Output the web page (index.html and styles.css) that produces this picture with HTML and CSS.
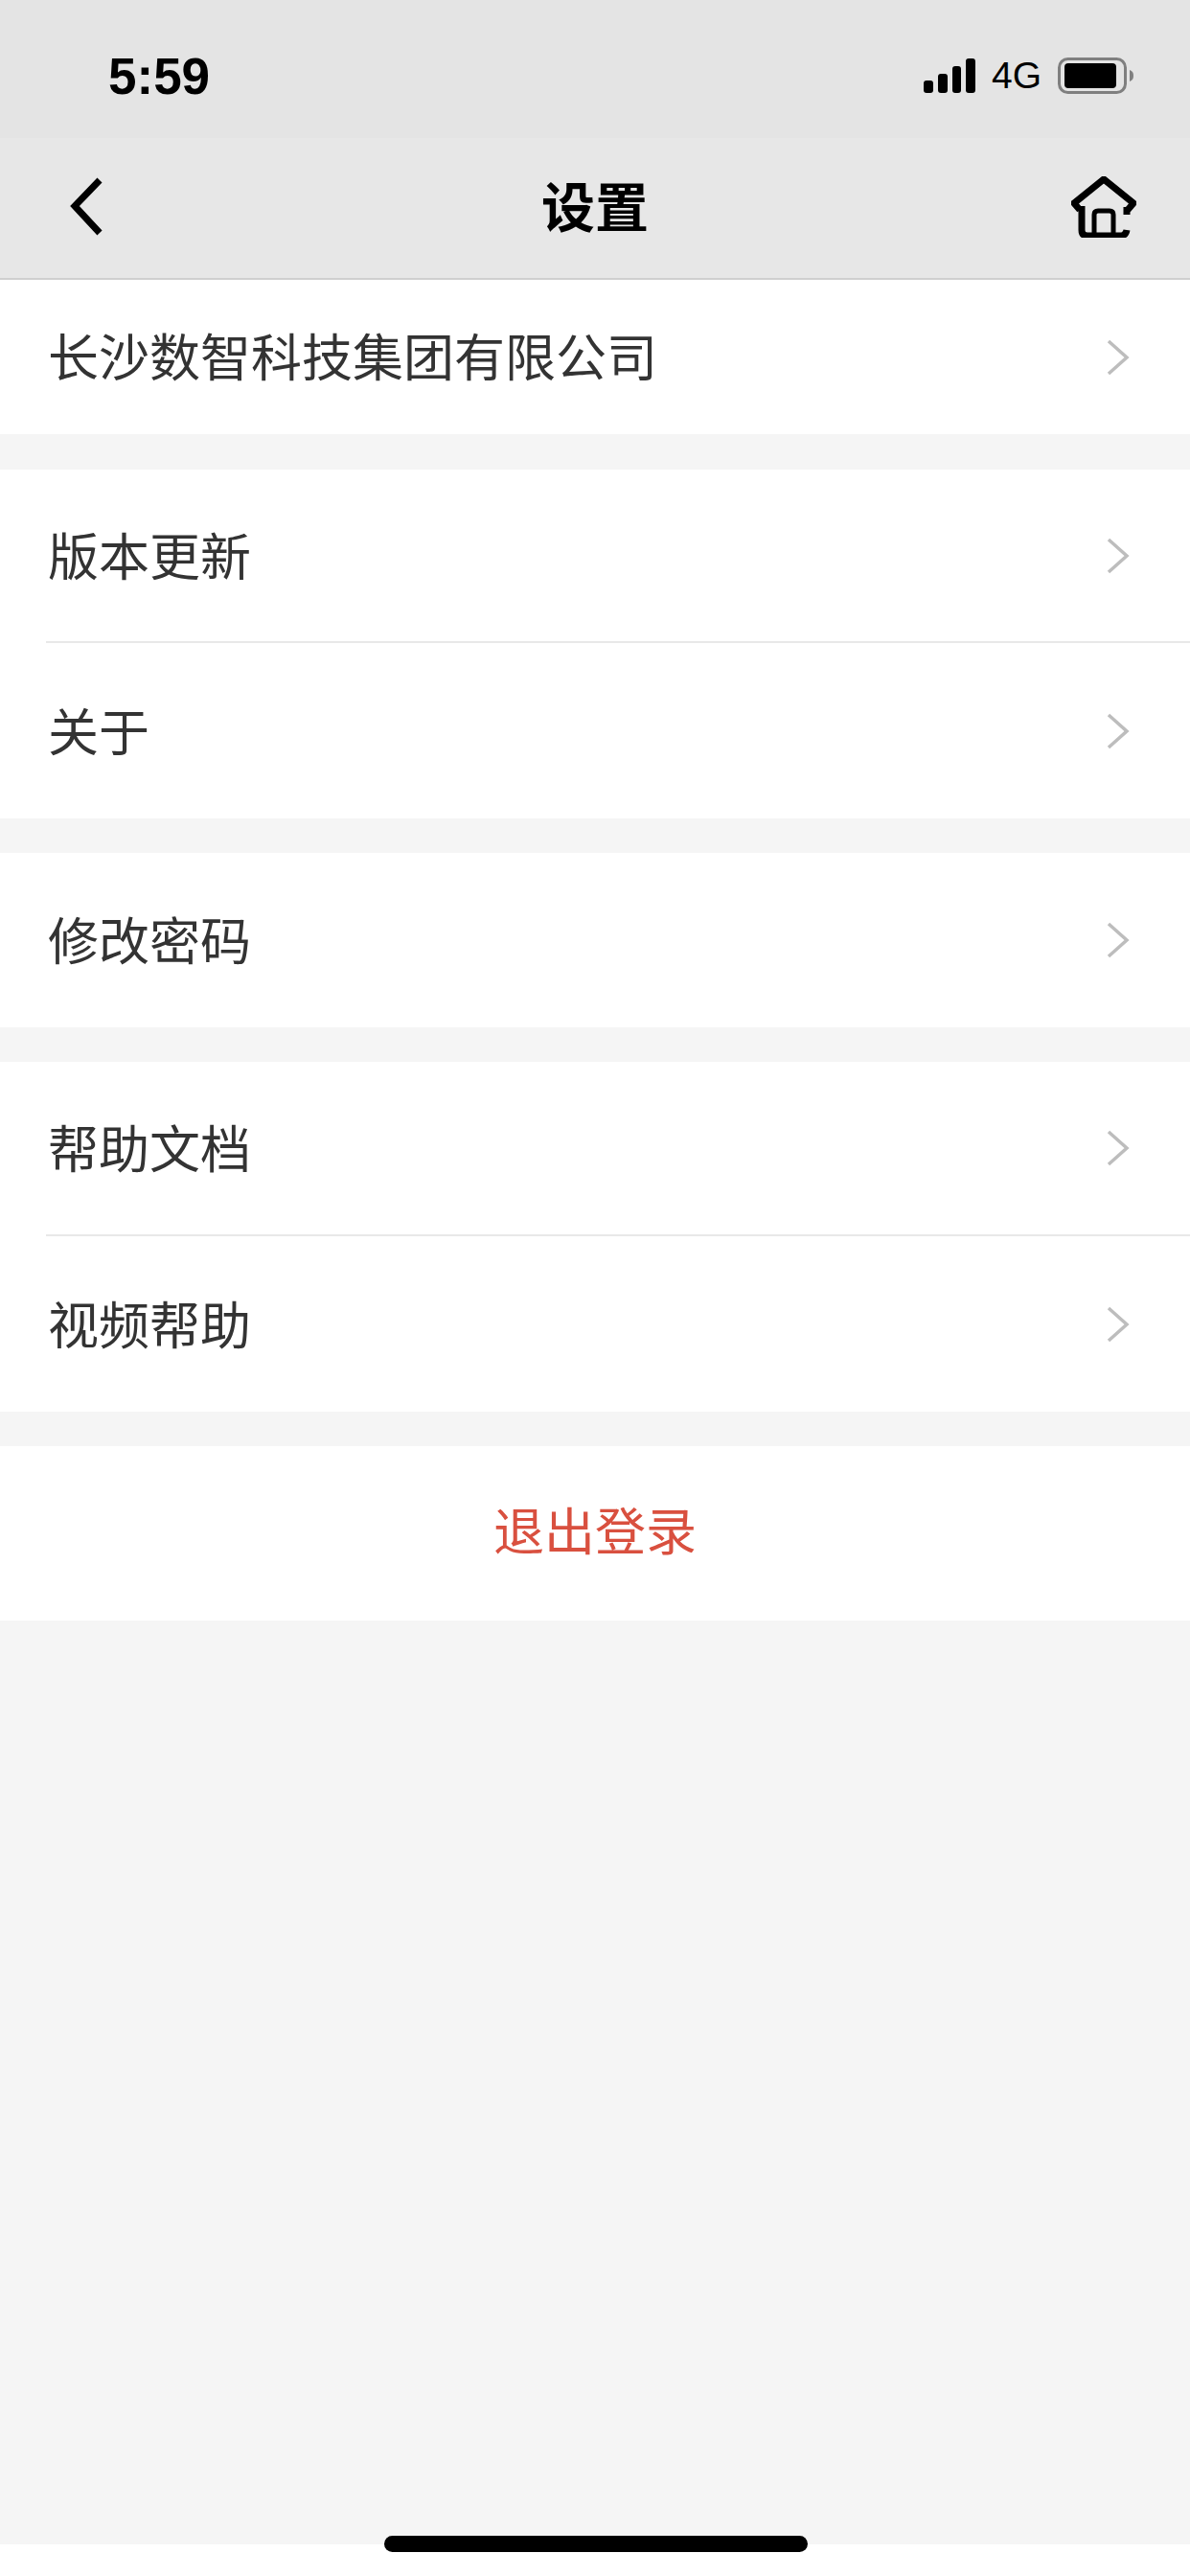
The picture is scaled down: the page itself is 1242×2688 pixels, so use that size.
FILE: index.html
```html
<!DOCTYPE html>
<html lang="zh">
<head>
    <meta charset="utf-8">
    <title>设置</title>
    <link rel="stylesheet" href="styles.css">
</head>
<body>
    <div class="page">
        <div class="status-bar">
            <span class="time">5:59</span>
            <div class="status-icons">
                <svg class="signal" width="54" height="36" viewBox="0 0 54 36">
                    <rect x="0" y="23" width="10" height="13" rx="3"/>
                    <rect x="15" y="16" width="10" height="20" rx="3"/>
                    <rect x="30" y="8" width="9" height="28" rx="3"/>
                    <rect x="44" y="0" width="10" height="36" rx="3"/>
                </svg>
                <span class="network">4G</span>
                <svg class="battery" width="79" height="38" viewBox="0 0 79 38">
                    <rect x="1.5" y="1.5" width="69" height="35" rx="9" fill="none" stroke="#7f7f7f" stroke-width="3"/>
                    <rect x="7" y="6" width="54" height="26" rx="4"/>
                    <path d="M75 13c3 1 4 3 4 6s-1 5-4 6z" fill="#7f7f7f"/>
                </svg>
            </div>
        </div>
        <div class="nav-bar">
            <svg class="back" width="36" height="62" viewBox="0 0 36 62">
                <path d="M32 3 6 30l26 28" fill="none" stroke="#000" stroke-width="7"/>
            </svg>
            <h1 class="nav-title">设置</h1>
            <svg class="home" width="68" height="64" viewBox="0 0 68 64">
                <path d="M9 35 3 28 34 3l31 25-6 7M11 31v25q0 6 6 6h34q6 0 7-6M58 32v8" fill="none" stroke="#000" stroke-width="7" stroke-linejoin="round"/>
                <path d="M24 60V40q0-4 4-4h12q4 0 4 4v20" fill="none" stroke="#000" stroke-width="5"/>
            </svg>
        </div>

        <div class="group group-company">
            <div class="row">
                <span>长沙数智科技集团有限公司</span>
                <svg class="chevron" width="26" height="38" viewBox="0 0 26 38"><path d="M3 2 22 19 3 36"/></svg>
            </div>
        </div>
        <div class="group">
            <div class="row row-top">
                <span>版本更新</span>
                <svg class="chevron" width="26" height="38" viewBox="0 0 26 38"><path d="M3 2 22 19 3 36"/></svg>
            </div>
            <div class="row row-bottom">
                <span>关于</span>
                <svg class="chevron" width="26" height="38" viewBox="0 0 26 38"><path d="M3 2 22 19 3 36"/></svg>
            </div>
        </div>
        <div class="group">
            <div class="row row-single">
                <span>修改密码</span>
                <svg class="chevron" width="26" height="38" viewBox="0 0 26 38"><path d="M3 2 22 19 3 36"/></svg>
            </div>
        </div>
        <div class="group group-help">
            <div class="row row-top">
                <span>帮助文档</span>
                <svg class="chevron" width="26" height="38" viewBox="0 0 26 38"><path d="M3 2 22 19 3 36"/></svg>
            </div>
            <div class="row row-bottom">
                <span>视频帮助</span>
                <svg class="chevron" width="26" height="38" viewBox="0 0 26 38"><path d="M3 2 22 19 3 36"/></svg>
            </div>
        </div>
        <div class="group">
            <div class="row row-single logout">退出登录</div>
        </div>

        <div class="filler"></div>
        <div class="home-area">
            <div class="home-indicator"></div>
        </div>
    </div>
</body>
</html>
```

FILE: styles.css
```css
html, body {
    margin: 0;
    padding: 0;
}
body {
    font-family: "Liberation Sans", "Noto Sans CJK SC", sans-serif;
    background: #f5f5f5;
    color: #333;
}
.page {
    width: 1242px;
    height: 2688px;
    display: flex;
    flex-direction: column;
    overflow: hidden;
}
.status-bar {
    height: 144px;
    flex: none;
    display: flex;
    align-items: center;
    justify-content: space-between;
    padding: 14px 59px 0 113px;
    box-sizing: border-box;
    background: #e4e4e4;
}
.time {
    font-size: 53px;
    font-weight: 700;
    color: #000;
}
.status-icons {
    display: flex;
    align-items: center;
    gap: 17px;
}
.network {
    font-size: 39px;
    color: #000;
}
.nav-bar {
    height: 148px;
    flex: none;
    display: flex;
    align-items: center;
    justify-content: space-between;
    padding: 0 56px 2px 72px;
    box-sizing: border-box;
    background: #e7e7e7;
    border-bottom: 2px solid #cfcfcf;
    position: relative;
}
.nav-title {
    margin: 0;
    font-size: 56px;
    font-weight: 700;
    color: #000;
    position: absolute;
    left: 0;
    right: 0;
    top: 28px;
    text-align: center;
}
.group {
    background: #fff;
    margin-bottom: 36px;
}
.group-company {
    margin-bottom: 37px;
}
.group-company,
.group-company .row {
    height: 161px;
}
.row {
    display: flex;
    align-items: center;
    justify-content: space-between;
    margin-left: 50px;
    padding-right: 62px;
    font-size: 53px;
    color: #333;
}
.row span {
    padding-bottom: 4px;
}
.group-company .row span {
    padding-bottom: 6px;
}
.row-top {
    height: 179px;
    margin-left: 48px;
    padding-left: 2px;
    border-bottom: 2px solid #e8e8e8;
}
.row-bottom {
    height: 183px;
}
.group-help .row-top {
    height: 180px;
}
.row-single {
    height: 182px;
}
.chevron {
    fill: none;
    stroke: #bdbdbd;
    stroke-width: 3.5;
}
.logout {
    margin-left: 0;
    padding-right: 0;
    padding-bottom: 10px;
    box-sizing: border-box;
    justify-content: center;
    color: #d9503f;
}
.filler {
    flex: 1;
    margin-top: -36px;
}
.home-area {
    height: 33px;
    flex: none;
    background: #fff;
    position: relative;
}
.home-indicator {
    position: absolute;
    left: 401px;
    top: -9px;
    width: 442px;
    height: 17px;
    border-radius: 9px;
    background: #000;
}
```
